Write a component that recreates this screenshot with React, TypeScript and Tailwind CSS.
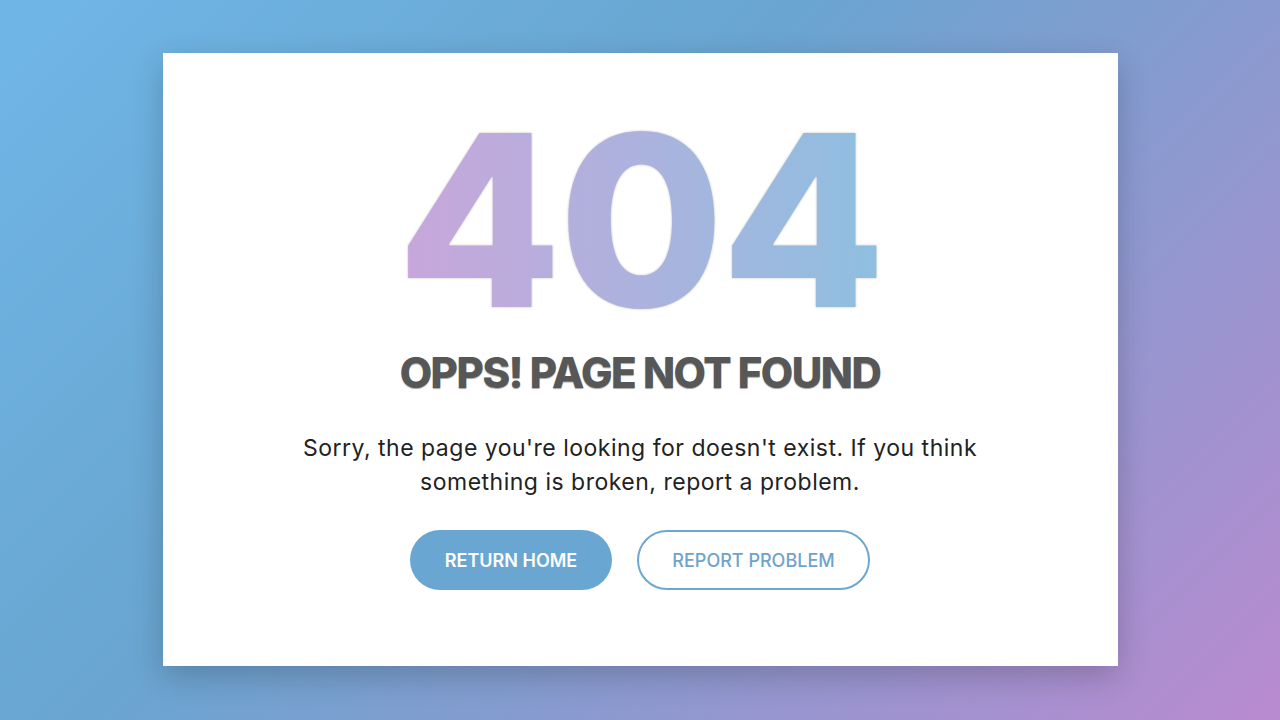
import React from 'react';

export default function App() {
  return (
    <div className="w-full h-[720px] pt-[53px] flex justify-center bg-[linear-gradient(135deg,#6fb6e7_0%,#69a5d0_40%,#b98acf_100%)] font-['Inter',sans-serif]">
      <div className="w-[955px] h-[613px] bg-white shadow-[0_10px_30px_rgba(0,0,0,0.2)] flex flex-col items-center">
        <h1 className="mt-[67px] text-[239px] leading-[200px] font-extrabold tracking-[-3px] bg-[linear-gradient(to_right,#c9a6db,#8ebfe0)] bg-clip-text text-transparent [filter:drop-shadow(0_0_1px_rgba(0,0,0,0.25))]">
          404
        </h1>
        <h2 className="mt-[28px] text-[42px] leading-[50px] font-extrabold tracking-[-1.5px] text-[#575757] [text-shadow:0_1px_1px_rgba(0,0,0,0.35)]">
          OPPS! PAGE NOT FOUND
        </h2>
        <p className="mt-[33px] w-[720px] text-center text-[23px] leading-[34px] tracking-[0.5px] text-[#222]">
          Sorry, the page you're looking for doesn't exist. If you think something is broken, report a problem.
        </p>
        <div className="mt-[31px] flex gap-[25px]">
          <button className="w-[202px] h-[60px] rounded-full bg-[#69a7d2] text-white text-[18px] font-semibold">
            RETURN HOME
          </button>
          <button className="w-[233px] h-[60px] rounded-full border-2 border-[#6ea7d0] text-[#6fa3cb] text-[18px] font-medium">
            REPORT PROBLEM
          </button>
        </div>
      </div>
    </div>
  );
}
